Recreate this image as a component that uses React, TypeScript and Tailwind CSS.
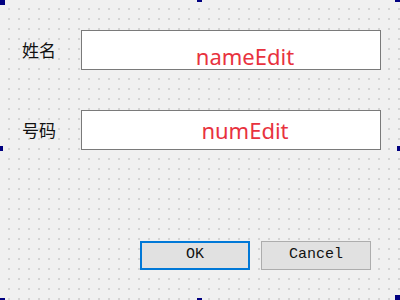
import React from "react";

const cjk = "font-['Microsoft_YaHei','Noto_Sans_CJK_SC',sans-serif]";

function Handle({ className }: { className: string }) {
  return <div className={`absolute w-[5px] h-[5px] bg-[#000080] ${className}`} />;
}

function Field({ label, value, textClass }: { label: string; value: string; textClass: string }) {
  return (
    <div className="flex items-center h-[40px]">
      <div className={`w-[81px] pl-[22px] text-[17px] text-[#111] ${cjk}`}>{label}</div>
      <div className={`w-[300px] h-[40px] border border-[#7a7a7a] bg-white flex justify-center ${textClass}`}>
        <span className="pl-[28px] text-[22px] leading-none text-[#e8323e] font-['Noto_Sans','Open_Sans',sans-serif]">
          {value}
        </span>
      </div>
    </div>
  );
}

export default function App() {
  return (
    <div className="relative w-[400px] h-[300px] overflow-hidden bg-[#f0f0f0] bg-[radial-gradient(circle,#c4c4c4_0.6px,transparent_0.9px)] bg-[length:10px_10px] bg-[position:4px_4px]">
      <div className="flex flex-col pt-[30px]">
        <Field label="姓名" value="nameEdit" textClass="items-end pb-[2px]" />
        <div className="h-[40px]" />
        <Field label="号码" value="numEdit" textClass="items-center" />
        <div className="flex gap-[11px] pl-[140px] pt-[91px]">
          <button className="w-[110px] h-[29px] border-2 border-[#0078d7] bg-[#e1e1e1] text-[15px] text-[#111] font-['Liberation_Mono',monospace]">
            OK
          </button>
          <button className="w-[110px] h-[29px] border border-[#adadad] bg-[#e1e1e1] text-[15px] text-[#111] font-['Liberation_Mono',monospace]">
            Cancel
          </button>
        </div>
      </div>
      <Handle className="left-0 top-0" />
      <Handle className="left-[197px] top-[-3px]" />
      <Handle className="right-0 top-[-3px]" />
      <Handle className="left-[-2px] top-[146px]" />
      <Handle className="right-[-2px] top-[146px]" />
      <Handle className="left-0 bottom-[-3px]" />
      <Handle className="left-[197px] bottom-[-3px]" />
      <Handle className="right-0 bottom-0" />
    </div>
  );
}
